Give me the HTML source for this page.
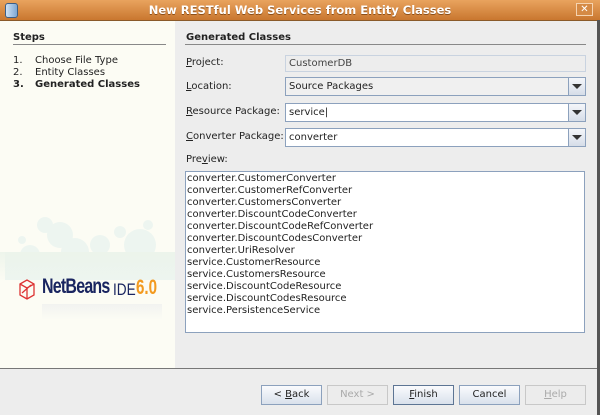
<html><head><style>
body{margin:0;width:600px;height:415px;background:#ededed;font-family:"DejaVu Sans",sans-serif;font-size:10px;color:#222;position:relative;overflow:hidden}
.a{position:absolute}
.title{left:0;top:0;width:600px;height:20px;background:linear-gradient(#e9a35e,#c9772f);border-bottom:1px solid #8a5a2a}
.title span{position:absolute;left:0;right:0;top:3px;text-align:center;color:#fff;font-weight:bold;font-size:11.5px;text-shadow:0 1px 0 #8a4e1a}
.left{left:0;top:21px;width:175px;height:347px;background:#fcfcf4}
.fld{background:#fff;border:1px solid #8ca1bd;height:17px;box-sizing:border-box;padding:2px 3px;font-size:10px}
.dd{position:absolute;right:0;top:0;width:16px;height:100%;border-left:1px solid #8ca1bd;background:linear-gradient(#f4f6fa,#d6dde8)}
.dd:after{content:"";position:absolute;left:3px;top:6px;border-left:5px solid transparent;border-right:5px solid transparent;border-top:5px solid #333}
.btn{top:385px;width:61px;height:20px;box-sizing:border-box;border:1px solid #8ca1bd;background:linear-gradient(#fafbfd,#d9e1ec);text-align:center;line-height:18px;font-size:10px}
.dis{border-color:#c8c8c8;background:#ececec;color:#aaa}
u{text-decoration:underline}
</style></head><body>
<div class="a title"><span>New RESTful Web Services from Entity Classes</span>
<div class="a" style="left:5px;top:3px;width:11px;height:13px;border-radius:3px;background:linear-gradient(90deg,#cfe2f5,#7ea7d3);border:1px solid #3c5f88"></div>
<div class="a" style="left:576px;top:3px;width:17px;height:13px;border:1px solid #f5d3b0;box-sizing:border-box;background:#d58a45;color:#fff;font-weight:bold;font-size:10px;line-height:11px;text-align:center">✕</div></div>
<div class="a" style="left:597px;top:20px;width:3px;height:395px;background:#555"></div>
<div class="a left"></div>
<svg class="a" style="left:0;top:200px" width="175" height="120"><g fill="#eaf4f0" opacity=".8"><circle cx="45" cy="25" r="8"/><circle cx="60" cy="35" r="13"/><circle cx="120" cy="32" r="6"/><circle cx="148" cy="25" r="5"/><circle cx="100" cy="45" r="10"/><circle cx="140" cy="45" r="16"/><circle cx="75" cy="52" r="14"/><circle cx="30" cy="55" r="10"/><circle cx="22" cy="40" r="4"/><rect x="5" y="52" width="170" height="28"/></g></svg>
<div class="a" style="left:0;top:252px;width:175px;height:30px;background:linear-gradient(rgba(236,244,234,.9),rgba(252,252,244,0))"></div>
<svg class="a" style="left:18px;top:279px" width="18" height="22"><path d="M2 5L9 1L16 5L16 16L9 20L2 16Z M2 5L9 9L16 5 M9 9L9 20 M4 14L13 6" fill="none" stroke="#d33" stroke-width="1.3"/></svg>
<div class="a" style="left:42px;top:275px;font-family:'Liberation Sans',sans-serif;font-weight:bold;font-size:21px;color:#1a2560;letter-spacing:-1px;transform:scaleX(.76);transform-origin:left">NetBeans</div>
<div class="a" style="left:113px;top:280px;font-family:'Liberation Sans',sans-serif;font-size:17px;color:#1a2560;transform:scaleX(.8);transform-origin:left">IDE</div>
<div class="a" style="left:136px;top:276px;font-family:'Liberation Sans',sans-serif;font-weight:bold;font-size:21px;color:#f39a1f;transform:scaleX(.72);transform-origin:left">6.0</div>
<div class="a" style="left:42px;top:304px;width:120px;height:16px;background:linear-gradient(rgba(200,205,225,.2),rgba(252,252,244,0))"></div>
<div class="a" style="left:13px;top:32px;font-weight:bold">Steps</div>
<div class="a" style="left:13px;top:44px;width:153px;height:1px;background:#888"></div>
<div class="a" style="left:13px;top:55px;line-height:12px">1.<br>2.<br><b>3.</b></div>
<div class="a" style="left:35px;top:55px;line-height:12px">Choose File Type<br>Entity Classes<br><b>Generated Classes</b></div>
<div class="a" style="left:186px;top:32px;font-weight:bold">Generated Classes</div>
<div class="a" style="left:185px;top:44px;width:401px;height:1px;background:#888"></div>
<div class="a" style="left:186px;top:57px"><u>P</u>roject:</div>
<div class="a fld" style="left:285px;top:55px;width:301px;background:#ededed;border-color:#c9d3e0;color:#444">CustomerDB</div>
<div class="a" style="left:186px;top:81px"><u>L</u>ocation:</div>
<div class="a fld" style="left:285px;top:77px;width:301px;height:19px;background:#f0f0f0;padding-top:3px">Source Packages<div class="dd"></div></div>
<div class="a" style="left:186px;top:106px"><u>R</u>esource Package:</div>
<div class="a fld" style="left:285px;top:103px;width:301px;height:19px;padding-top:3px">service|<div class="dd"></div></div>
<div class="a" style="left:186px;top:131px"><u>C</u>onverter Package:</div>
<div class="a fld" style="left:285px;top:128px;width:301px;height:19px;padding-top:3px">converter<div class="dd"></div></div>
<div class="a" style="left:186px;top:154px">Pre<u>v</u>iew:</div>
<div class="a" style="left:185px;top:171px;width:400px;height:162px;box-sizing:border-box;border:1px solid #8ca1bd;background:#fff;padding:1px 0 0 1px;line-height:12px">converter.CustomerConverter<br>converter.CustomerRefConverter<br>converter.CustomersConverter<br>converter.DiscountCodeConverter<br>converter.DiscountCodeRefConverter<br>converter.DiscountCodesConverter<br>converter.UriResolver<br>service.CustomerResource<br>service.CustomersResource<br>service.DiscountCodeResource<br>service.DiscountCodesResource<br>service.PersistenceService</div>
<div class="a" style="left:0;top:368px;width:597px;height:1px;background:#777"></div>
<div class="a btn" style="left:261px">&lt; <u>B</u>ack</div>
<div class="a btn dis" style="left:327px">Next &gt;</div>
<div class="a btn" style="left:393px;border-color:#5d7594"><u>F</u>inish</div>
<div class="a btn" style="left:459px">Cancel</div>
<div class="a btn dis" style="left:525px"><u>H</u>elp</div>
</body></html>
